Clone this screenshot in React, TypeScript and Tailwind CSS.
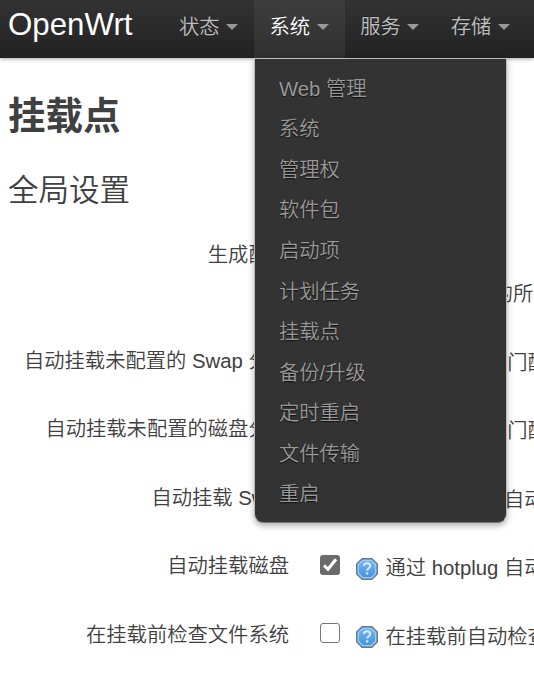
import type { ReactNode } from "react";

const nav = [
  { label: "状态", active: false },
  { label: "系统", active: true },
  { label: "服务", active: false },
  { label: "存储", active: false },
];

const menu = ["Web 管理", "系统", "管理权", "软件包", "启动项", "计划任务", "挂载点", "备份/升级", "定时重启", "文件传输", "重启"];

const rows = [
  { label: "自动挂载未配置的 Swap 分区", help: "如果分区未专门配置则自动挂载", checked: false },
  { label: "自动挂载未配置的磁盘分区", help: "如果磁盘未专门配置则自动挂载", checked: false },
  { label: "自动挂载 Swap", help: "通过 hotplug 自动挂载 Swap 分区", checked: true },
  { label: "自动挂载磁盘", help: "通过 hotplug 自动挂载磁盘", checked: true },
  { label: "在挂载前检查文件系统", help: "在挂载前自动检查文件系统错误", checked: false },
];

function HelpIcon() {
  return (
    <svg width="22" height="22" viewBox="0 0 22 22" className="shrink-0">
      <defs>
        <linearGradient id="helpFill" x1="0" y1="0" x2="0" y2="1">
          <stop offset="0" stopColor="#77b5ee" />
          <stop offset="1" stopColor="#4294df" />
        </linearGradient>
      </defs>
      <path d="M6.2 .8h9.6L21.2 6v10L15.8 21.2H6.2L.8 16V6Z" fill="#9ccbf3" stroke="#5f788f" strokeWidth="1.5" />
      <path d="M7 3h8L19 7v8L15 19H7L3 15V7Z" fill="url(#helpFill)" />
      <path d="M7.9 8c.2-1.9 1.4-2.7 3.100-2.700 1.900 0 3.200 1 3.200 2.700 0 2.200-3 2.300-3 4.600" fill="none" stroke="#d9ecfd" strokeWidth="2" />
      <path d="M10 14.300h2.300v2.200H10z" fill="#d9ecfd" />
    </svg>
  );
}

function Check({ checked }: { checked: boolean }) {
  return checked ? (
    <span className="flex size-5 shrink-0 items-center justify-center rounded-[3px] bg-[#6b6b6b]">
      <svg width="20" height="20" viewBox="0 0 20 20">
        <path d="M4 10.400l4 3.900 8-10" fill="none" stroke="#fff" strokeWidth="3" />
      </svg>
    </span>
  ) : (
    <span className="size-5 shrink-0 rounded-[3px] border border-[#767676] bg-white" />
  );
}

function Row({ label, children }: { label: string; children?: ReactNode }) {
  return (
    <div className="flex h-[68.4px] whitespace-nowrap">
      <div className="w-[289px] shrink-0 pt-px text-right leading-7">{label}</div>
      {children}
    </div>
  );
}

export default function App() {
  return (
    <div className="h-[680px] w-[534px] overflow-hidden bg-white font-['Liberation_Sans','Noto_Sans_CJK_SC',sans-serif] text-[20.31px] font-[350] text-[#404040]">
      <header className="relative z-10 flex h-[58px] bg-linear-to-b from-[#333] to-[#222] shadow-[0_1px_4px_rgba(0,0,0,0.35)]">
        <div className="w-[157px] shrink-0 pl-2 text-[31.25px] leading-[49px] text-white">OpenWrt</div>
        <nav className="flex">
          {nav.map((item) => (
            <div
              key={item.label}
              className={`relative flex h-[58px] w-[90.6px] shrink-0 items-start ${item.active ? "ml-[6.4px] bg-linear-to-b from-[#3d3d3d] to-[#303030] pl-[15.6px] text-white" : item.label === "状态" ? "pl-[22px] text-[#bfbfbf]" : "pl-[15.6px] text-[#bfbfbf]"}`}
            >
              <span className="leading-[54px] [text-shadow:0_-1px_0_rgba(0,0,0,0.25)]">{item.label}</span>
              <span className="mt-6 ml-[6.5px] border-x-[6px] border-t-[6px] border-x-transparent border-t-[#999]" />
              {item.active && (
                <ul className="absolute top-[58px] left-0 h-[465px] w-[253px] rounded-b-[9px] border border-[#bbb] border-b-[#777] bg-[#333] bg-clip-border pt-[9.8px] shadow-[0_3px_6px_rgba(0,0,0,0.3)]">
                  {menu.map((m) => (
                    <li key={m} className="h-[40.55px] pl-6 leading-[40px] text-[#999] [text-shadow:0_1px_1px_rgba(0,0,0,0.7)]">
                      {m}
                    </li>
                  ))}
                </ul>
              )}
            </div>
          ))}
        </nav>
      </header>
      <main>
        <h2 className="mt-[30px] h-[56px] pl-2 text-[37.5px] leading-[56px] font-bold">挂载点</h2>
        <h3 className="mt-[23px] h-[46px] pl-2 text-[30.5px] leading-[46px]">全局设置</h3>
        <div className="mt-7">
          <div className="flex h-[105px] whitespace-nowrap">
            <div className="w-[289px] shrink-0 text-right leading-7">生成配置</div>
            <div className="pt-[39px] pl-[82px] leading-7">查找当前挂载的所有文件系统</div>
          </div>
          {rows.map((row) => (
            <Row key={row.label} label={row.label}>
              <div className="flex pt-[3.6px] pl-[31px]">
                <Check checked={row.checked} />
                <div className="mt-[3px] ml-4 flex h-[22px] items-center gap-[7.5px]">
                  <HelpIcon />
                  <span className="-mt-px leading-7">{row.help}</span>
                </div>
              </div>
            </Row>
          ))}
        </div>
      </main>
    </div>
  );
}
